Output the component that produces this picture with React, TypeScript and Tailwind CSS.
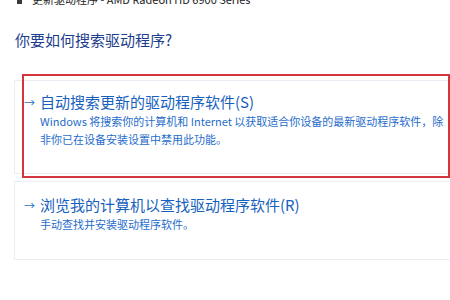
import React from 'react';

function Option({
  title,
  lines,
  className,
}: {
  title: string;
  lines: string[];
  className: string;
}) {
  return (
    <div className={`w-[460px] border border-[#e9eef5] bg-white pl-[9px] ${className}`}>
      <div className="flex items-center leading-[20px]">
        <span className="w-[16px] text-[11px] text-[#2a6fc4]">→</span>
        <span className="whitespace-nowrap text-[15px] text-[#1761be]">{title}</span>
      </div>
      <div className="pl-[16px] text-[11px] leading-[18px] text-[#1f6dcc]">
        {lines.map((l) => (
          <div key={l} className="whitespace-nowrap">
            {l}
          </div>
        ))}
      </div>
    </div>
  );
}

export default function App() {
  return (
    <div className="relative h-[300px] w-[450px] overflow-hidden bg-white font-['Noto_Sans_CJK_SC',sans-serif]">
      {/* window title, mostly scrolled out of view */}
      <div className="-mt-[7px] flex h-[12px] items-center pl-[17px]">
        <span className="mt-[3px] h-[6px] w-[5px] bg-[#3a3a3a]" />
        <span className="ml-[10px] whitespace-nowrap text-[11px] text-[#222]">
          更新驱动程序 - AMD Radeon HD 6900 Series
        </span>
      </div>

      <h1 className="mt-[25px] pl-[15px] text-[15px] leading-[20px] text-[#1d3d8d]">
        你要如何搜索驱动程序?
      </h1>

      <div className="mt-[30px] pl-[14px]">
        <Option
          className="h-[94px] pt-[11px]"
          title="自动搜索更新的驱动程序软件(S)"
          lines={[
            'Windows 将搜索你的计算机和 Internet 以获取适合你设备的最新驱动程序软件，除',
            '非你已在设备安装设置中禁用此功能。',
          ]}
        />
        <Option
          className="mt-[7px] h-[79px] pt-[13px]"
          title="浏览我的计算机以查找驱动程序软件(R)"
          lines={['手动查找并安装驱动程序软件。']}
        />
      </div>

      {/* red highlight frame over the first option */}
      <div className="absolute left-[22px] top-[74px] h-[104px] w-[428px] border-2 border-[#d2353c]" />
    </div>
  );
}
